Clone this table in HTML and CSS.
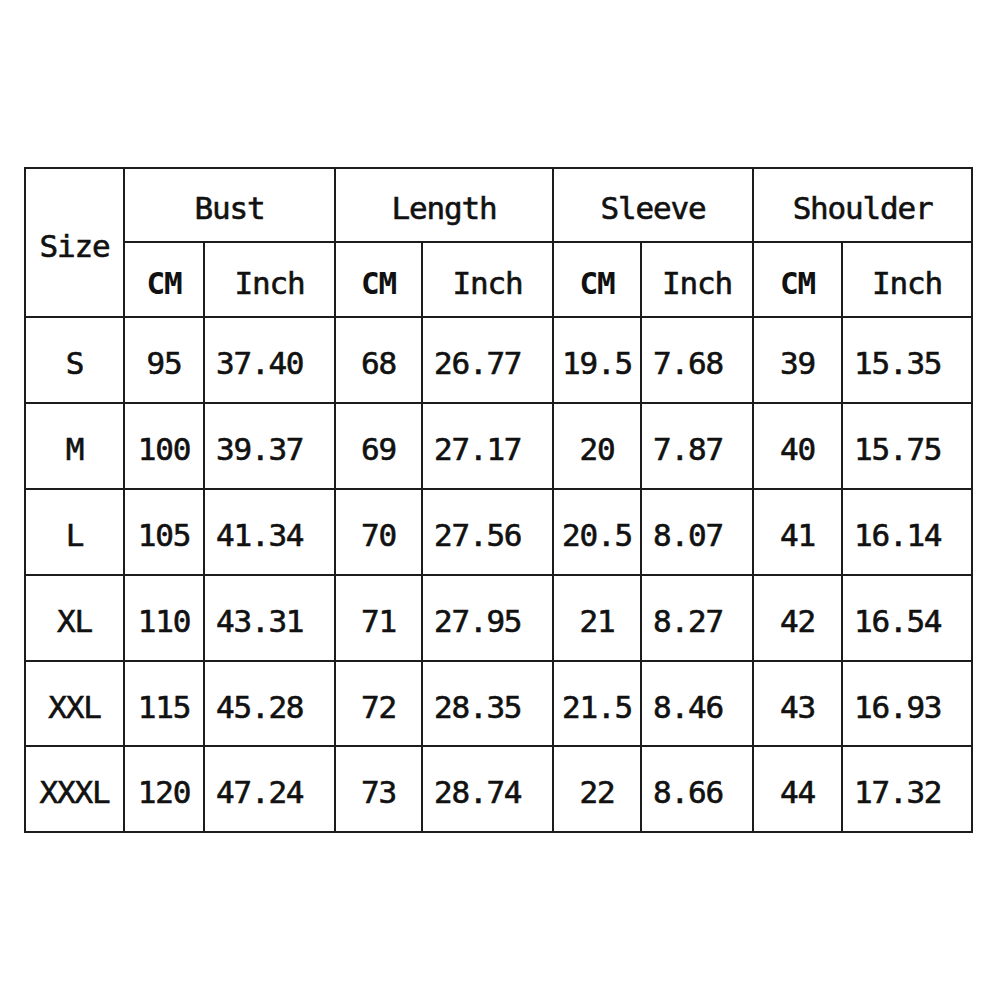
FILE: index.html
```html
<!DOCTYPE html>
<html>
<head>
<meta charset="utf-8">
<link rel="stylesheet" href="styles.css">
</head>
<body>
<div class="page">
  <div class="chart">
    <div class="cell size-head">Size</div>
    <div class="cell group">Bust</div>
    <div class="cell group">Length</div>
    <div class="cell group">Sleeve</div>
    <div class="cell group">Shoulder</div>

    <div class="cell unit cm">CM</div><div class="cell unit">Inch</div>
    <div class="cell unit cm">CM</div><div class="cell unit">Inch</div>
    <div class="cell unit cm">CM</div><div class="cell unit">Inch</div>
    <div class="cell unit cm">CM</div><div class="cell unit">Inch</div>

    <div class="cell">S</div>
    <div class="cell">95</div><div class="cell inch">37.40</div>
    <div class="cell">68</div><div class="cell inch">26.77</div>
    <div class="cell">19.5</div><div class="cell inch">7.68</div>
    <div class="cell">39</div><div class="cell inch">15.35</div>

    <div class="cell">M</div>
    <div class="cell">100</div><div class="cell inch">39.37</div>
    <div class="cell">69</div><div class="cell inch">27.17</div>
    <div class="cell">20</div><div class="cell inch">7.87</div>
    <div class="cell">40</div><div class="cell inch">15.75</div>

    <div class="cell">L</div>
    <div class="cell">105</div><div class="cell inch">41.34</div>
    <div class="cell">70</div><div class="cell inch">27.56</div>
    <div class="cell">20.5</div><div class="cell inch">8.07</div>
    <div class="cell">41</div><div class="cell inch">16.14</div>

    <div class="cell">XL</div>
    <div class="cell">110</div><div class="cell inch">43.31</div>
    <div class="cell">71</div><div class="cell inch">27.95</div>
    <div class="cell">21</div><div class="cell inch">8.27</div>
    <div class="cell">42</div><div class="cell inch">16.54</div>

    <div class="cell">XXL</div>
    <div class="cell">115</div><div class="cell inch">45.28</div>
    <div class="cell">72</div><div class="cell inch">28.35</div>
    <div class="cell">21.5</div><div class="cell inch">8.46</div>
    <div class="cell">43</div><div class="cell inch">16.93</div>

    <div class="cell">XXXL</div>
    <div class="cell">120</div><div class="cell inch">47.24</div>
    <div class="cell">73</div><div class="cell inch">28.74</div>
    <div class="cell">22</div><div class="cell inch">8.66</div>
    <div class="cell">44</div><div class="cell inch">17.32</div>
  </div>
</div>
</body>
</html>
```
FILE: styles.css
```css
html, body {
  margin: 0;
  padding: 0;
  background: #ffffff;
}

.page {
  width: 1001px;
  height: 1001px;
  padding: 167px 0 0 24px;
  box-sizing: border-box;
}

.chart {
  display: grid;
  grid-template-columns: 97px 78px 129px 85px 129px 86px 110px 87px 128px;
  grid-template-rows: 72px 73px 84px 84px 84px 84px 83px 84px;
  gap: 2px;
  padding: 2px;
  width: max-content;
  background: #1c1c1c;
  font-family: "DejaVu Sans Mono", "Liberation Mono", monospace;
  font-size: 31px;
  letter-spacing: -1.2px;
  color: #111111;
  -webkit-text-stroke: 0.6px #111111;
}

.cell {
  background: #ffffff;
  display: flex;
  align-items: center;
  justify-content: center;
  padding-top: 6px;
  box-sizing: border-box;
  white-space: pre;
}

.size-head {
  grid-row: span 2;
}

.group {
  grid-column: span 2;
}

.cm {
  font-weight: bold;
  -webkit-text-stroke: 0;
}

.inch {
  justify-content: flex-start;
  padding-left: 11px;
}
```
